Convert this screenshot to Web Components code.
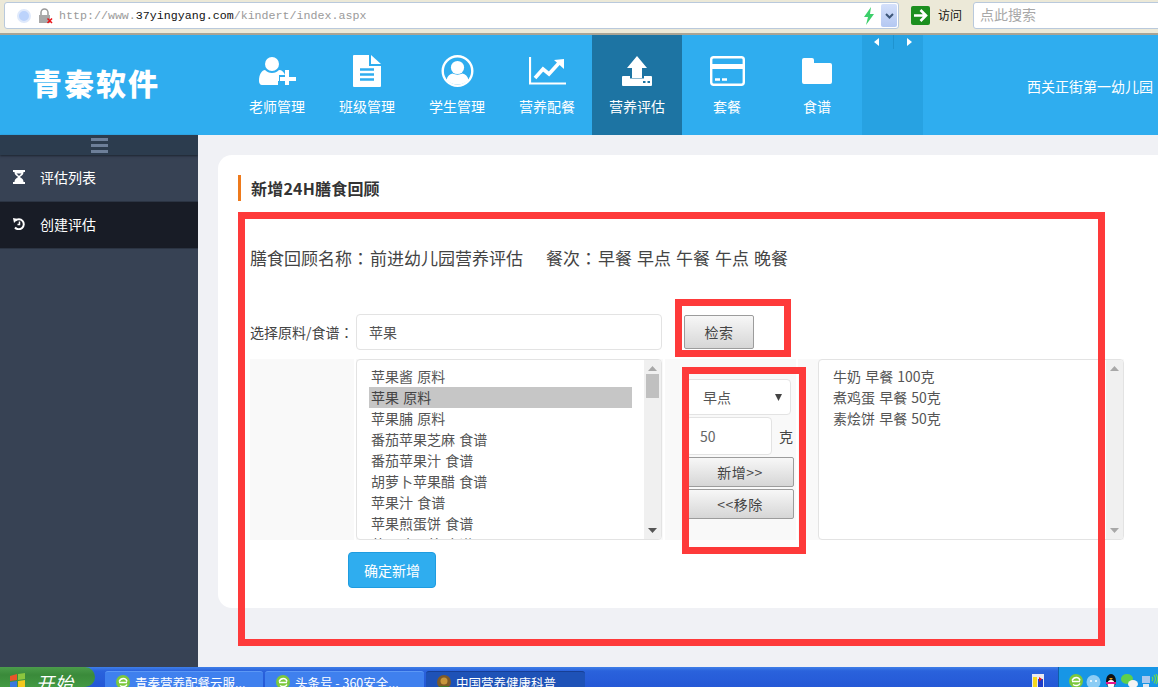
<!DOCTYPE html>
<html lang="zh">
<head>
<meta charset="utf-8">
<title>青秦软件</title>
<style>
  html, body { margin: 0; height: 100%; overflow: hidden; }
  body {
    display: flex;
    flex-direction: column;
    height: 687px;
    position: relative;
    font-family: "Noto Sans CJK SC", "Liberation Sans", sans-serif;
    background: #f0f1f5;
  }
  .main { flex: 1; display: flex; min-height: 0; }
</style>
</head>
<body>
  <browser-bar></browser-bar>
  <app-header>
    <nav-item icon="userPlus">老师管理</nav-item>
    <nav-item icon="file">班级管理</nav-item>
    <nav-item icon="userCircle">学生管理</nav-item>
    <nav-item icon="chart">营养配餐</nav-item>
    <nav-item icon="upload" active>营养评估</nav-item>
    <nav-item icon="card">套餐</nav-item>
    <nav-item icon="folder">食谱</nav-item>
  </app-header>
  <div class="main">
    <side-nav>
      <side-item icon="hourglass">评估列表</side-item>
      <side-item icon="history" active>创建评估</side-item>
    </side-nav>
    <content-area>
      <form-card></form-card>
    </content-area>
  </div>
  <task-bar></task-bar>

  <!-- hand drawn annotations lying over the screenshot -->
  <red-mark x="238" y="212" w="867" h="434"></red-mark>
  <red-mark x="675" y="299" w="116" h="58"></red-mark>
  <red-mark x="682" y="367" w="124" h="187"></red-mark>

<script>
const IE_ICON = `
  <circle cx="7" cy="7" r="7" fill="#7cc83c"/>
  <path d="M3 7.500h8M4 10.500c3 2 6 1 7-1M11 6.500c-1-4-6-4-8 0" fill="none" stroke="#fff" stroke-width="1.500"/>`;

const ICONS = {
  userPlus: { w: 37, h: 28, svg: `
    <circle cx="13" cy="7" r="7" fill="#fff"/>
    <path d="M0 24c0-7 3-11 6-11 2 2 4 3 7 3s5-1 7-3c3 0 5 2 6 5h-6v6h-1v4H3c-2 0-3-2-3-4z" fill="#fff"/>
    <path d="M26 13h4v7h7v4h-7v4h-4v-4h-5v-4h5z" fill="#fff"/>` },
  file: { w: 28, h: 32, svg: `
    <path d="M0 1a1 1 0 0 1 1-1h15v11h12v20a1 1 0 0 1-1 1H1a1 1 0 0 1-1-1z" fill="#fff"/>
    <path d="M18 0l10 9H18z" fill="#fff"/>
    <path d="M7 14.500h14M7 19.500h14M7 24.500h14" stroke="#2fadef" stroke-width="2.400"/>` },
  userCircle: { w: 33, h: 32, svg: `
    <circle cx="16.500" cy="16" r="14.800" fill="none" stroke="#fff" stroke-width="2.400"/>
    <circle cx="16.500" cy="12.500" r="6.600" fill="#fff"/>
    <path d="M5.500 25c1-4 3-6 6-6.500 3 1.500 7 1.500 10 0 3 .5 5 2.500 6 6.500-3 3-7 4.500-11 4.500s-8-1.500-11-4.500z" fill="#fff"/>` },
  chart: { w: 37, h: 28, svg: `
    <path d="M1 0v26.500h36" fill="none" stroke="#fff" stroke-width="2.200"/>
    <path d="M6 21l8-9 6 5 10-11" fill="none" stroke="#fff" stroke-width="3.600"/>
    <path d="M25 3l10-1v10z" fill="#fff"/>` },
  upload: { w: 30, h: 30, svg: `
    <path d="M15 0l10 12h-5v10h-10V12H5z" fill="#fff"/>
    <path d="M1 20h7v2.500h14V20h7a1 1 0 0 1 1 1v8a1 1 0 0 1-1 1H1a1 1 0 0 1-1-1v-8a1 1 0 0 1 1-1z" fill="#fff"/>
    <path d="M21 26h2.500M25.500 26H28" stroke="#1d74a3" stroke-width="2"/>` },
  card: { w: 35, h: 30, svg: `
    <rect x="1.200" y="1.200" width="32.600" height="27.600" rx="2.500" fill="none" stroke="#fff" stroke-width="2.400"/>
    <rect x="1" y="8" width="33" height="5" fill="#fff"/>
    <path d="M5 23.500h5M12 23.500h5" stroke="#fff" stroke-width="2.400"/>` },
  folder: { w: 30, h: 26, svg: `
    <path d="M2 0h8a2 2 0 0 1 2 2v3h16a2 2 0 0 1 2 2v17a2 2 0 0 1-2 2H2a2 2 0 0 1-2-2V2a2 2 0 0 1 2-2z" fill="#fff"/>` },
  hourglass: { w: 12, h: 14, svg: `
    <path d="M0 0h12v2H0zM0 12h12v2H0z" fill="#fff"/>
    <path d="M1.500 2h9c0 3-2.500 4-3.500 5 1 1 3.500 2 3.500 5h-9c0-3 2.500-4 3.500-5-1-1-3.500-2-3.500-5z" fill="#fff"/>
    <path d="M3.500 3.500h5L6 6z" fill="#374254"/>` },
  history: { w: 12, h: 12, svg: `
    <path d="M2.400 2.500A5 5 0 1 1 2 9.500" fill="none" stroke="#fff" stroke-width="2"/>
    <path d="M0 0l5 1-4 4z" fill="#fff"/>
    <path d="M6.500 3.500v3H4.500" fill="none" stroke="#fff" stroke-width="1.500"/>` }
};

class AppIcon extends HTMLElement {
  constructor() {
    super();
    this.attachShadow({ mode: 'open' });
  }
  connectedCallback() {
    const icon = ICONS[this.getAttribute('name')];
    this.shadowRoot.innerHTML = `
      <style>:host { display: block; line-height: 0; } </style>
      <svg width="${icon.w}" height="${icon.h}" viewBox="0 0 ${icon.w} ${icon.h}">${icon.svg}</svg>`;
  }
}

class BrowserBar extends HTMLElement {
  constructor() {
    super();
    this.attachShadow({ mode: 'open' });
  }
  connectedCallback() {
    this.shadowRoot.innerHTML = `
      <style>
        :host {
          display: flex;
          align-items: flex-start;
          flex: none;
          height: 35px;
          box-sizing: border-box;
          padding: 2px 0 0 4px;
          background: #ece9d8;
          border-bottom: 2px solid #a9a495;
          font-family: "Noto Sans CJK SC", sans-serif;
        }
        .field {
          display: flex;
          align-items: center;
          box-sizing: border-box;
          height: 27px;
          background: #fff;
          border: 1px solid #b9c9dc;
          border-radius: 3px;
        }
        .url { width: 895px; }
        .globe {
          width: 10px; height: 10px; margin-left: 12px;
          border-radius: 50%;
          background: #bcd3fb;
          border: 2px solid #dfe9fb;
        }
        .lock { margin-left: 7px; }
        .addr {
          margin-left: 6px;
          flex: 1;
          font: 11.650px "Liberation Mono", monospace;
          color: #9a9a9a;
        }
        .addr b { font-weight: 400; color: #111; }
        .bolt { margin-right: 6px; }
        .drop {
          width: 16px; height: 23px;
          margin-right: 1px;
          display: flex; align-items: center; justify-content: center;
          background: linear-gradient(#d4e0fa, #b4c8f2);
          border-radius: 2px;
        }
        .go { margin: 4px 0 0 12px; }
        .visit { margin: 4px 0 0 8px; font-size: 12px; color: #111; width: 35px; line-height: 18px; }
        .search {
          flex: 1;
          margin-right: -10px;
          padding: 0 0 3px 6px;
          font-size: 14px;
          color: #a8a8a8;
          border-radius: 3px 0 0 3px;
        }
      </style>
      <div class="field url">
        <span class="globe"></span>
        <svg class="lock" width="15" height="16" viewBox="0 0 15 16">
          <path d="M3 7V4.500a3.500 3.500 0 0 1 7 0V7" fill="none" stroke="#999" stroke-width="1.500"/>
          <rect x="1" y="7" width="11" height="8" fill="#a8a8a8"/>
          <path d="M9.500 10.500l4.500 4.500M14 10.500L9.500 15" stroke="#e8141a" stroke-width="1.600"/>
        </svg>
        <span class="addr">http://www.<b>37yingyang.com</b>/kindert/index.aspx</span>
        <svg class="bolt" width="12" height="18" viewBox="0 0 12 18"><path d="M8 0L1 10h4l-2 8 8-11H7z" fill="#3ccf6a"/></svg>
        <span class="drop">
          <svg width="9" height="6" viewBox="0 0 9 6"><path d="M1 1l3.500 3.500L8 1" fill="none" stroke="#3d5678" stroke-width="2"/></svg>
        </span>
      </div>
      <svg class="go" width="19" height="19" viewBox="0 0 19 19">
        <rect width="19" height="19" rx="2" fill="#1c8f1f"/>
        <path d="M3 9.500h11M9.500 4l5.500 5.500L9.500 15" fill="none" stroke="#fff" stroke-width="2.600"/>
      </svg>
      <span class="visit">访问</span>
      <div class="field search">点此搜索</div>`;
  }
}

class AppHeader extends HTMLElement {
  constructor() {
    super();
    this.attachShadow({ mode: 'open' });
  }
  connectedCallback() {
    this.shadowRoot.innerHTML = `
      <style>
        :host {
          display: flex;
          flex: none;
          height: 100px;
          background: #2fadef;
          color: #fff;
          font-family: "Noto Sans CJK SC", sans-serif;
        }
        .logo {
          width: 232px;
          box-sizing: border-box;
          padding: 27px 0 0 32px;
          font-size: 30px;
          line-height: 40px;
          font-weight: 900;
          letter-spacing: 2px;
          white-space: nowrap;
        }
        .pager {
          width: 61px;
          height: 100px;
          display: flex;
          justify-content: space-between;
          align-items: flex-start;
          box-sizing: border-box;
          padding: 3px 11px 0 12px;
          background: #27a2e2;
        }
        .pager i { width: 1px; height: 11px; margin-top: -3px; background: #1f93cf; padding-bottom: 3px; }
        .school {
          flex: 1;
          text-align: right;
          padding: 40px 5px 0 0;
          font-size: 14px;
          line-height: 22px;
          white-space: nowrap;
        }
      </style>
      <div class="logo">青秦软件</div>
      <slot></slot>
      <div class="pager">
        <svg width="5" height="8" viewBox="0 0 5 8"><path d="M5 0v8L0 4z" fill="#fff"/></svg>
        <i></i>
        <svg width="5" height="8" viewBox="0 0 5 8"><path d="M0 0v8l5-4z" fill="#fff"/></svg>
      </div>
      <div class="school">西关正街第一幼儿园</div>`;
  }
}

class NavItem extends HTMLElement {
  constructor() {
    super();
    this.attachShadow({ mode: 'open' });
  }
  connectedCallback() {
    this.shadowRoot.innerHTML = `
      <style>
        :host {
          display: flex;
          flex-direction: column;
          align-items: center;
          width: 90px;
          height: 100px;
          box-sizing: border-box;
          font-size: 14px;
          color: #fff;
        }
        :host([active]) { background: #1d74a3; }
        .ic { height: 32px; margin-top: 20px; display: flex; align-items: center; }
        .tx { margin-top: 9px; line-height: 20px; }
      </style>
      <div class="ic"><app-icon name="${this.getAttribute('icon')}"></app-icon></div>
      <div class="tx"><slot></slot></div>`;
  }
}

class SideNav extends HTMLElement {
  constructor() {
    super();
    this.attachShadow({ mode: 'open' });
  }
  connectedCallback() {
    this.shadowRoot.innerHTML = `
      <style>
        :host {
          display: block;
          flex: none;
          width: 198px;
          background: #374254;
        }
        .toggle {
          height: 20px;
          display: flex;
          flex-direction: column;
          align-items: center;
          justify-content: center;
          gap: 3px;
          background: #2c3c4e;
          box-shadow: 0 1px 2px #1c2430;
        }
        .toggle i { display: block; width: 17px; height: 3px; background: #6d7f99; }
      </style>
      <div class="toggle"><i></i><i></i><i></i></div>
      <slot></slot>`;
  }
}

class SideItem extends HTMLElement {
  constructor() {
    super();
    this.attachShadow({ mode: 'open' });
  }
  connectedCallback() {
    this.shadowRoot.innerHTML = `
      <style>
        :host {
          display: flex;
          align-items: center;
          box-sizing: border-box;
          height: 47px;
          padding: 0 0 2px 13px;
          font-size: 14px;
          color: #fff;
          border-bottom: 1px solid #2b3443;
        }
        :host([active]) { background: #181c26; }
        app-icon { width: 12px; margin-right: 15px; }
      </style>
      <app-icon name="${this.getAttribute('icon')}"></app-icon>
      <slot></slot>`;
  }
}

class ContentArea extends HTMLElement {
  constructor() {
    super();
    this.attachShadow({ mode: 'open' });
  }
  connectedCallback() {
    this.shadowRoot.innerHTML = `
      <style>
        :host {
          display: block;
          flex: 1;
          min-width: 0;
          padding: 20px 0 0 20px;
          background: #f0f1f5;
        }
      </style>
      <slot></slot>`;
  }
}

class GreyButton extends HTMLElement {
  constructor() {
    super();
    this.attachShadow({ mode: 'open' });
  }
  connectedCallback() {
    this.shadowRoot.innerHTML = `
      <style>
        :host {
          display: flex;
          align-items: center;
          justify-content: center;
          box-sizing: border-box;
          font-size: 14px;
          letter-spacing: 0.5px;
          color: #444;
          background: linear-gradient(#f7f7f7, #d6d6d6);
          border: 1px solid #9c9c9c;
          border-radius: 2px;
        }
      </style>
      <slot></slot>`;
  }
}

class ListBox extends HTMLElement {
  constructor() {
    super();
    this.attachShadow({ mode: 'open' });
  }
  connectedCallback() {
    const thumb = this.hasAttribute('thumb') ? '<div class="thumb"></div>' : '';
    this.shadowRoot.innerHTML = `
      <style>
        :host {
          display: flex;
          box-sizing: border-box;
          width: 306px;
          height: 181px;
          background: #fff;
          border: 1px solid #e3e3e3;
          border-radius: 4px;
          overflow: hidden;
          font-size: 14px;
          word-spacing: 1px;
          color: #555;
        }
        .rows { flex: 1; min-width: 0; padding: 6px 12px 0 12px; overflow: hidden; }
        .bar {
          flex: none;
          width: 17px;
          background: #f0f0f0;
          display: flex;
          flex-direction: column;
          align-items: center;
          padding: 6px 0;
          box-sizing: border-box;
        }
        .thumb { width: 13px; height: 24px; margin-top: 3px; background: #c0c0c0; }
        .down { margin-top: auto; }
      </style>
      <div class="rows"><slot></slot></div>
      <div class="bar">
        <svg width="9" height="5" viewBox="0 0 9 5"><path d="M4.500 0L9 5H0z" fill="#a8a8a8"/></svg>
        ${thumb}
        <svg class="down" width="9" height="5" viewBox="0 0 9 5"><path d="M0 0h9L4.500 5z" fill="${thumb ? '#555' : '#a8a8a8'}"/></svg>
      </div>`;
  }
}

class ListRow extends HTMLElement {
  constructor() {
    super();
    this.attachShadow({ mode: 'open' });
  }
  connectedCallback() {
    this.shadowRoot.innerHTML = `
      <style>
        :host {
          display: block;
          height: 21px;
          line-height: 21px;
          padding-left: 2px;
          white-space: nowrap;
        }
        :host([selected]) { background: #c6c6c6; color: #444; }
      </style>
      <slot></slot>`;
  }
}

class FormCard extends HTMLElement {
  constructor() {
    super();
    this.attachShadow({ mode: 'open' });
  }
  connectedCallback() {
    this.shadowRoot.innerHTML = `
      <style>
        :host {
          display: block;
          box-sizing: border-box;
          height: 453px;
          margin-right: -30px;
          padding: 20px 0 0 32px;
          background: #fff;
          border-radius: 14px;
          font-family: "Noto Sans CJK SC", sans-serif;
          color: #444;
        }
        .title {
          margin-left: -12px;
          height: 26px;
          line-height: 26px;
          padding-left: 10px;
          border-left: 3px solid #ee7a1c;
          font-size: 16px;
          font-weight: 700;
          letter-spacing: 0.2px;
          color: #333;
        }
        .colon { font-family: "Noto Sans CJK TC", sans-serif; }
        .summary {
          margin-top: 45px;
          height: 24px;
          line-height: 24px;
          font-size: 17px;
          color: #444;
          white-space: nowrap;
        }
        .summary .colon { margin-right: 1px; }
        .summary .meals { margin-left: 23px; }
        .summary em { font-style: normal; margin-right: 5px; }
        .grid {
          display: grid;
          grid-template-columns: 104px 307px 131px 326px;
          column-gap: 2px;
          width: 874px;
        }
        .search { margin-top: 44px; height: 36px; align-items: center; }
        .label { font-size: 14px; white-space: nowrap; }
        .box {
          box-sizing: border-box;
          display: flex;
          align-items: center;
          background: #fff;
          border: 1px solid #e3e3e3;
          border-radius: 4px;
          font-size: 14px;
          color: #555;
        }
        .keyword { width: 306px; height: 36px; padding-left: 12px; }
        .find { width: 70px; height: 34px; margin-left: 19px; }
        .pick { margin-top: 9px; height: 181px; }
        .pick > div { background: #f9f9f9; }
        .side { padding: 20px 0 0 21px; box-sizing: border-box; }
        .meal { width: 105px; height: 36px; padding: 0 8px 0 16px; justify-content: space-between; }
        .meal svg { flex: none; }
        .qty { display: flex; align-items: center; margin-top: 2px; font-size: 14px; }
        .qty .box { width: 86px; height: 38px; padding-left: 13px; color: #666; }
        .qty span { margin-left: 7px; }
        .side grey-button { width: 108px; height: 30px; margin-top: 2px; }
        .right { padding-left: 20px; }
        .confirm {
          display: flex;
          align-items: center;
          justify-content: center;
          box-sizing: border-box;
          width: 88px;
          height: 36px;
          margin: 12px 0 0 98px;
          font-size: 14px;
          color: #fff;
          background: #2fadef;
          border: 1px solid #1e9ce0;
          border-radius: 4px;
        }
      </style>
      <div class="title">新增24H膳食回顾</div>
      <div class="summary">膳食回顾名称<span class="colon" lang="zh-TW">：</span>前进幼儿园营养评估<span class="meals">餐次<span class="colon" lang="zh-TW">：</span><em>早餐</em><em>早点</em><em>午餐</em><em>午点</em><em>晚餐</em></span></div>
      <div class="grid search">
        <div class="label">选择原料/食谱<span class="colon" lang="zh-TW">：</span></div>
        <div class="box keyword">苹果</div>
        <div><grey-button class="find">检索</grey-button></div>
        <div></div>
      </div>
      <div class="grid pick">
        <div></div>
        <div>
          <list-box thumb>
            <list-row>苹果酱 原料</list-row>
            <list-row selected>苹果 原料</list-row>
            <list-row>苹果脯 原料</list-row>
            <list-row>番茄苹果芝麻 食谱</list-row>
            <list-row>番茄苹果汁 食谱</list-row>
            <list-row>胡萝卜苹果醋 食谱</list-row>
            <list-row>苹果汁 食谱</list-row>
            <list-row>苹果煎蛋饼 食谱</list-row>
            <list-row>苹果鸡蛋羹 食谱</list-row>
          </list-box>
        </div>
        <div class="side">
          <div class="box meal">早点
            <svg width="7" height="7" viewBox="0 0 7 7"><path d="M0 0h7L3.500 7z" fill="#444"/></svg>
          </div>
          <div class="qty"><div class="box">50</div><span>克</span></div>
          <grey-button>新增&gt;&gt;</grey-button>
          <grey-button>&lt;&lt;移除</grey-button>
        </div>
        <div class="right">
          <list-box>
            <list-row>牛奶 早餐 100克</list-row>
            <list-row>煮鸡蛋 早餐 50克</list-row>
            <list-row>素烩饼 早餐 50克</list-row>
          </list-box>
        </div>
      </div>
      <div class="confirm">确定新增</div>`;
  }
}

class TaskButton extends HTMLElement {
  constructor() {
    super();
    this.attachShadow({ mode: 'open' });
  }
  connectedCallback() {
    const ico = this.hasAttribute('active')
      ? '<circle cx="7" cy="7" r="7" fill="#7d5a28"/><circle cx="7" cy="6" r="3.500" fill="#c8963c"/><path d="M2 11h10v3H2z" fill="#3f7a2a"/>'
      : IE_ICON;
    this.shadowRoot.innerHTML = `
      <style>
        :host {
          display: flex;
          align-items: flex-start;
          flex: none;
          box-sizing: border-box;
          height: 18px;
          margin-top: 4px;
          padding: 3px 0 0 11px;
          gap: 5px;
          font-size: 12.5px;
          line-height: 16px;
          color: #fff;
          background: #3f80ee;
          border-top: 1px solid #5c98f5;
          border-radius: 3px 3px 0 0;
          white-space: nowrap;
          overflow: hidden;
        }
        :host([active]) { background: #1e52b7; border-top-color: #173f95; }
        svg { flex: none; }
      </style>
      <svg width="14" height="14" viewBox="0 0 14 14">${ico}</svg><slot></slot>`;
  }
}

class TaskBar extends HTMLElement {
  constructor() {
    super();
    this.attachShadow({ mode: 'open' });
  }
  connectedCallback() {
    this.shadowRoot.innerHTML = `
      <style>
        :host {
          display: flex;
          flex: none;
          height: 20px;
          overflow: hidden;
          background: linear-gradient(#3f7fe8 0, #2a62dc 4px, #2458d6 100%);
          font-family: "Noto Sans CJK SC", sans-serif;
        }
        .start {
          flex: none;
          display: flex;
          align-items: flex-start;
          gap: 10px;
          box-sizing: border-box;
          width: 95px;
          margin-right: 10px;
          padding: 6px 0 0 9px;
          background: linear-gradient(#4b9c4b, #3a8a3a 40%, #439a43);
          border-radius: 0 10px 10px 0;
          color: #fff;
          font-size: 18px;
          line-height: 20px;
          font-style: italic;
        }
        .start b { font-weight: 400; letter-spacing: 1px; margin-top: -1px; }
        .tasks { display: flex; gap: 2px; flex: 1; }
        .a { width: 158px; }
        .b { width: 159px; }
        .c { width: 159px; }
        .quick { flex: none; margin: 7px 14px 0 0; }
        .tray {
          flex: none;
          display: flex;
          align-items: flex-start;
          gap: 3px;
          box-sizing: border-box;
          width: 100px;
          padding: 7px 0 0 10px;
          background: #1796e6;
          border-left: 1px solid #0f5fa8;
        }
      </style>
      <div class="start">
        <svg width="17" height="14" viewBox="0 0 17 14">
          <path d="M1 3l7-2v6l-7 1z" fill="#e8562a"/>
          <path d="M9 1l7-1v6l-7 1z" fill="#8cc63e"/>
          <path d="M1 9l7-1v6H1z" fill="#3b78e0"/>
          <path d="M9 8l7-1v7H9z" fill="#f4c81e"/>
        </svg>
        <b>开始</b>
      </div>
      <div class="tasks">
        <task-button class="a">青秦营养配餐云服...</task-button>
        <task-button class="b">头条号 - 360安全...</task-button>
        <task-button class="c" active>中国营养健康科普</task-button>
      </div>
      <svg class="quick" width="12" height="13" viewBox="0 0 12 13">
        <rect width="12" height="13" fill="#e8e8f0"/>
        <path d="M1 3h4v10H1z" fill="#f4d81e"/><path d="M6 5h5v8H6z" fill="#1e3cc8"/><path d="M7 3l3 2-3 3z" fill="#e8141a"/>
      </svg>
      <div class="tray">
        <svg width="14" height="14" viewBox="0 0 14 14">${IE_ICON}</svg>
        <svg width="15" height="14" viewBox="0 0 15 14"><circle cx="7.500" cy="8" r="7" fill="#8ccdf5"/><circle cx="5" cy="7" r="1" fill="#fff"/><circle cx="10" cy="7" r="1" fill="#fff"/></svg>
        <svg width="14" height="14" viewBox="0 0 14 14"><ellipse cx="7" cy="7" rx="5" ry="7" fill="#111"/><ellipse cx="7" cy="10" rx="3.500" ry="4" fill="#fff"/><path d="M2 8h10v2H2z" fill="#e8148c"/><path d="M5 4h4l-2 2z" fill="#f4a81e"/></svg>
        <svg width="17" height="14" viewBox="0 0 17 14"><ellipse cx="6" cy="5" rx="6" ry="5" fill="#5fd04a"/><ellipse cx="12" cy="10" rx="5" ry="4" fill="#f4f4f4"/></svg>
        <svg width="17" height="14" viewBox="0 0 17 14"><rect x="1" y="2" width="8" height="7" fill="#a9c8ee"/><rect x="2" y="10" width="6" height="4" fill="#dfe6f0"/><path d="M11 3c1 1 1 3 0 4M13 1c2 2 2 6 0 8M15 0c2 3 2 7 0 10" fill="none" stroke="#6fdc4a" stroke-width="1.200"/></svg>
      </div>`;
  }
}

class RedMark extends HTMLElement {
  constructor() {
    super();
    this.attachShadow({ mode: 'open' });
  }
  connectedCallback() {
    const a = n => this.getAttribute(n);
    this.shadowRoot.innerHTML = `
      <style>
        :host {
          display: block;
          position: absolute;
          left: ${a('x')}px;
          top: ${a('y')}px;
          width: ${a('w')}px;
          height: ${a('h')}px;
          box-sizing: border-box;
          border: 7px solid #fe3a3a;
          pointer-events: none;
        }
      </style>`;
  }
}

customElements.define('app-icon', AppIcon);
customElements.define('browser-bar', BrowserBar);
customElements.define('app-header', AppHeader);
customElements.define('nav-item', NavItem);
customElements.define('side-nav', SideNav);
customElements.define('side-item', SideItem);
customElements.define('content-area', ContentArea);
customElements.define('grey-button', GreyButton);
customElements.define('list-box', ListBox);
customElements.define('list-row', ListRow);
customElements.define('form-card', FormCard);
customElements.define('task-button', TaskButton);
customElements.define('task-bar', TaskBar);
customElements.define('red-mark', RedMark);
</script>
</body>
</html>
